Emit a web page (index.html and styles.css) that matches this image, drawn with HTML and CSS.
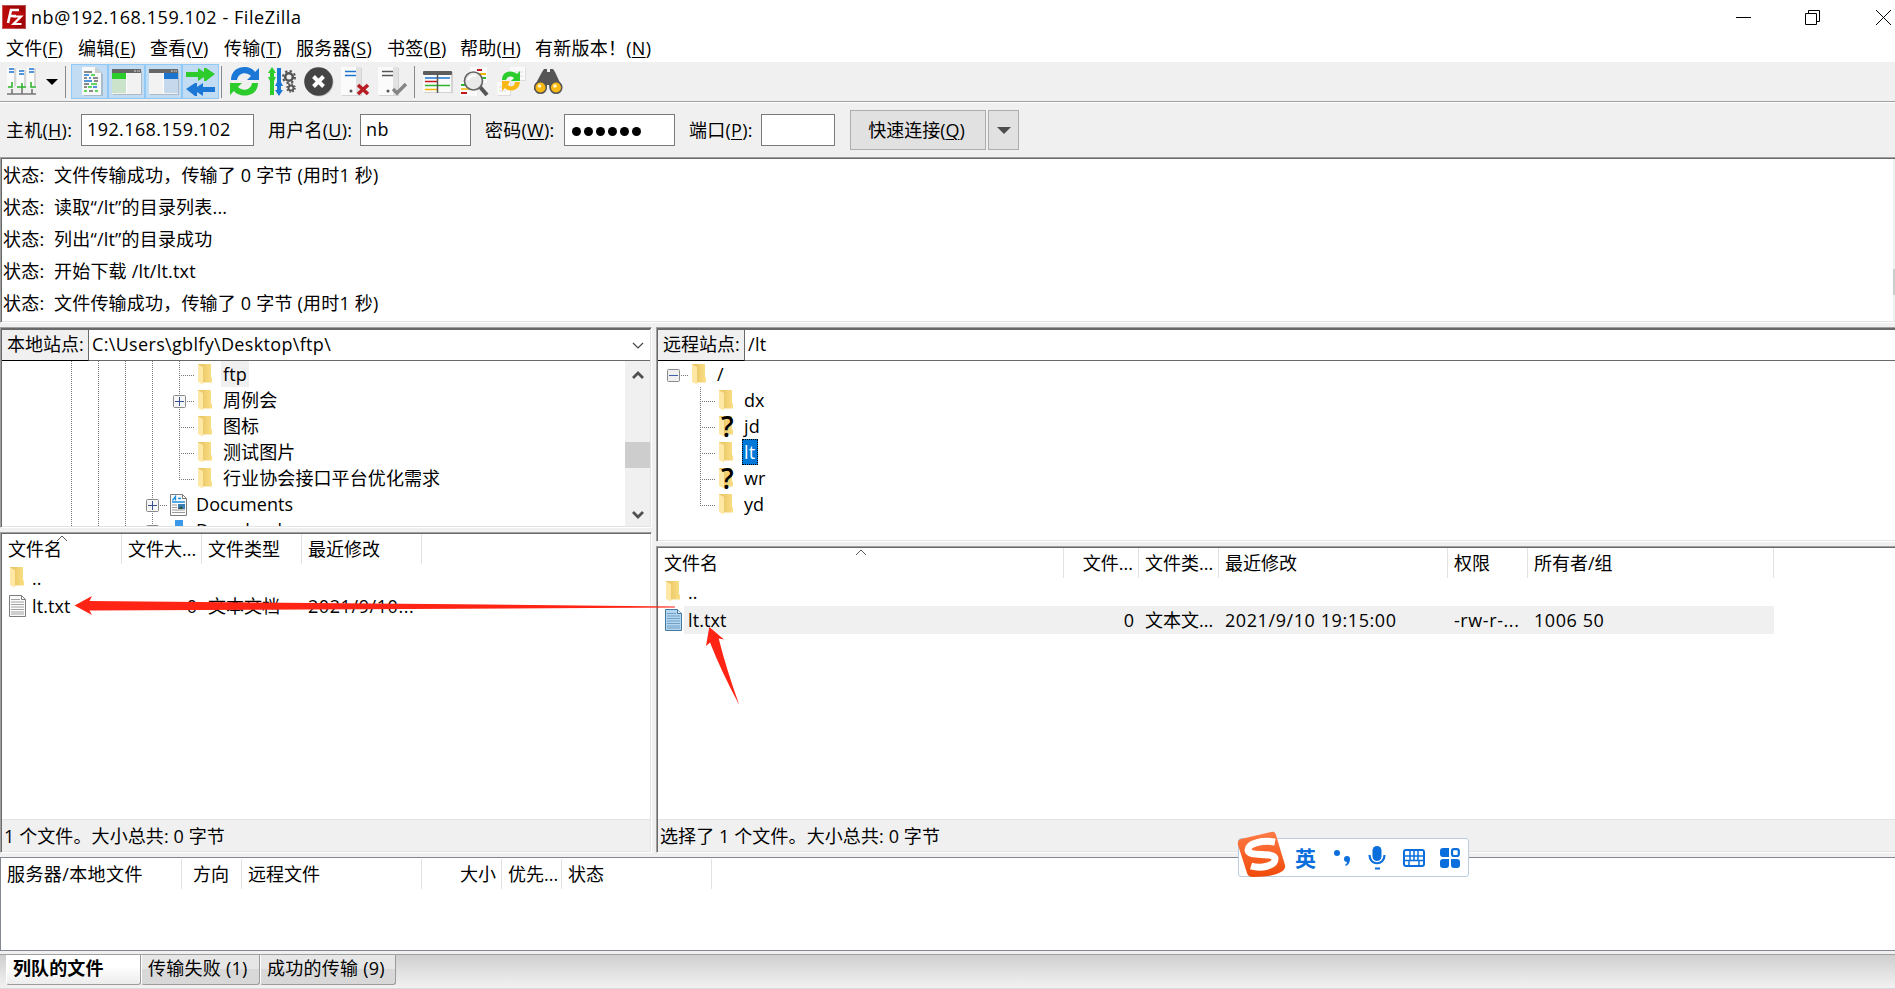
FILE: index.html
```html
<!DOCTYPE html>
<html lang="zh-CN">

<head>
    <meta charset="utf-8">
    <title>nb@192.168.159.102 - FileZilla</title>
    <link rel="stylesheet" href="styles.css">
</head>

<body>
    <!-- shared icons -->
    <svg class="defs" width="0" height="0">
        <defs>
            <linearGradient id="gFolder" x1="0" x2="1" y1="0" y2="0">
                <stop offset="0.3" stop-color="#ebc968" />
                <stop offset="1" stop-color="#fbdf87" />
            </linearGradient>
            <linearGradient id="gSogou" x1="0" x2="0" y1="0" y2="1">
                <stop offset="0" stop-color="#ff7a45" />
                <stop offset="1" stop-color="#f04a0a" />
            </linearGradient>
            <symbol id="folder" viewBox="0 0 15 22">
                <path d="M0 0H13V13.500H14V18.500H4.500L0 17Z" fill="url(#gFolder)" />
                <path d="M0 0.500L5 3V20.500L0 18Z" fill="#ffe8a6" />
            </symbol>
            <symbol id="file" viewBox="0 0 17 22">
                <path d="M0.500 0.500H12.500L16.500 4.500V21.500H0.500Z" fill="#fbfbfb" stroke="#7d7d7d" />
                <path d="M12.500 0.500V4.500H16.500" fill="none" stroke="#7d7d7d" />
                <path d="M2 4.500H11M2 7H15M2 9.500H15M2 12H15M2 14.500H15M2 17H15M2 19H15" stroke="#a2a2a2" />
            </symbol>
            <symbol id="file-sel" viewBox="0 0 17 22">
                <path d="M0.500 0.500H12.500L16.500 4.500V21.500H0.500Z" fill="#b5d7f1" stroke="#44789f" />
                <path d="M12.500 0.500V4.500H16.500" fill="#d9ebf8" stroke="#44789f" />
                <path d="M2 4.500H11M2 7H15M2 9.500H15M2 12H15M2 14.500H15M2 17H15M2 19H15" stroke="#6f9fc3" />
            </symbol>
            <symbol id="docs" viewBox="0 0 17 22">
                <path d="M0.500 0.500H12.500L16.500 4.500V21.500H0.500Z" fill="#fbfbfb" stroke="#7d7d7d" />
                <path d="M12.500 0.500V4.500H16.500" fill="none" stroke="#7d7d7d" />
                <path d="M2.500 6.500L5.500 2.500V6.500M8 4.500H11M2 8H15" stroke="#1e8fe0" stroke-width="1.300" fill="none" />
                <path d="M2 11H7M2 13.500H7M2 16H15M2 18.500H15" stroke="#999" />
                <rect x="8" y="10" width="7" height="5" fill="#3d7fb5" />
                <path d="M8 15L11 12L13 15Z" fill="#2b5540" />
            </symbol>
            <symbol id="twisty-plus" viewBox="0 0 13 13">
                <rect x="0.500" y="0.500" width="12" height="12" rx="1" fill="#f6f6f6" stroke="#8a8a8a" />
                <path d="M2 6.500H11M6.500 2V11" stroke="#33518f" />
            </symbol>
            <symbol id="twisty-minus" viewBox="0 0 13 13">
                <rect x="0.500" y="0.500" width="12" height="12" rx="1" fill="#f0f0f0" stroke="#8a8a8a" />
                <path d="M2 6.500H11" stroke="#3f5fa8" />
            </symbol>
            <symbol id="server" viewBox="0 0 22 30">
                <rect x="1" y="1" width="20" height="28" fill="#d4d4d4" />
                <rect width="20" height="28" fill="#e2e2e2" />
                <rect width="15" height="28" fill="#fbfbfb" />
            </symbol>
        </defs>
    </svg>

    <div class="window">
        <div class="titlebar">
            <svg class="logo" width="24" height="24" viewBox="0 0 24 24">
                <rect width="24" height="24" fill="#b80a0a" />
                <path d="M0 0H24V24H12L24 8Z" fill="#8f0606" opacity=".6" />
                <rect x=".5" y=".5" width="23" height="23" fill="none" stroke="#fff" stroke-dasharray="1 1" opacity=".6" />
                <path d="M6 18L9 5H17M8 11H14" fill="none" stroke="#fff" stroke-width="2.600" />
                <path d="M11.500 11.500H19L11.500 19H19.500" fill="none" stroke="#fff" stroke-width="2.200" />
            </svg>
            <span class="title">nb@192.168.159.102 - FileZilla</span>
            <svg class="controls" width="160" height="17" viewBox="0 0 160 17">
                <path d="M1 8.500H16" stroke="#000" />
                <path d="M70.500 4.500H81.500V15.500H70.500ZM73.500 4.500V1.500H84.500V12.500H81.500" fill="none" stroke="#000" />
                <path d="M141 1L156 16M156 1L141 16" stroke="#000" />
            </svg>
        </div>

        <div class="menubar">
            <span>文件(<u>F</u>)</span>
            <span>编辑(<u>E</u>)</span>
            <span class="view">查看(<u>V</u>)</span>
            <span>传输(<u>T</u>)</span>
            <span class="server">服务器(<u>S</u>)</span>
            <span class="bookmark">书签(<u>B</u>)</span>
            <span class="help">帮助(<u>H</u>)</span>
            <span>有新版本！(<u>N</u>)</span>
        </div>

        <div class="toolbar">
            <div class="btn">
                <svg viewBox="0 0 30 30">
                    <g fill="#fbfbfb"><rect width="9" height="19" /><rect x="10" y="2" width="9" height="18" /><rect x="20" width="9" height="19" /></g>
                    <path d="M8 1V19M18 3V20M28 1V19" stroke="#d6d6d6" stroke-width="2" />
                    <path d="M2 2H7M2 5H7M12 4H17M12 7H17M22 2H27M22 5H27" stroke="#1b74cf" stroke-width="1.300" />
                    <path d="M5 15V20H1M10 20H19M15 16V22M24 15V20H29" fill="none" stroke="#2fb52f" stroke-width="1.600" />
                    <path d="M0 27H29M5 22V27M15 22V27M25 22V27" stroke="#777" stroke-width="1.600" />
                </svg>
            </div>
            <div class="arrow"><svg viewBox="0 0 12 6"><path d="M0 0H12L6 6Z" /></svg></div>
            <div class="sep first"></div>
            <div class="group">
                <div class="btn on">
                    <svg viewBox="-2 0 30 30">
                        <path d="M7 1H20L26 7V29H7Z" fill="#a9bccc" /><path d="M5 0H18L24 6V28H5Z" fill="#f8f8f8" /><path d="M18 0V6H24Z" fill="#ccc" />
                        <path d="M7 5H15M7 11H10M16 11H21M7 17H12M7 20H10M17 14H21M12 24H16" stroke="#666" stroke-width="1.600" />
                        <path d="M7 8H12M12 11H14M7 14H15M16 20H20" stroke="#1b74cf" stroke-width="1.600" />
                        <path d="M14 8H18M14 17H20M7 24H10M11 20H15M18 24H21" stroke="#2bcc2b" stroke-width="1.600" />
                    </svg>
                </div>
                <div class="btn on">
                    <svg viewBox="0 0 30 30">
                        <rect x="1" y="4" width="29" height="24" fill="#adb9c4" /><rect y="2" width="29" height="25" fill="#f2f2f2" /><rect y="2" width="29" height="4" fill="#666" />
                        <path d="M22 4H24M25 4H26.500M27 4H28" stroke="#ddd" /><rect y="6" width="14" height="6" fill="#2bcc2b" /><rect y="12" width="14" height="14" fill="#cbe3ca" /><path d="M14.500 6V27" stroke="#fff" />
                    </svg>
                </div>
                <div class="btn on">
                    <svg viewBox="0 0 30 30">
                        <rect x="1" y="4" width="29" height="24" fill="#adb9c4" /><rect y="2" width="29" height="25" fill="#f2f2f2" /><rect y="2" width="29" height="4" fill="#666" />
                        <path d="M22 4H24M25 4H26.500M27 4H28" stroke="#ddd" /><rect x="15" y="6" width="14" height="6" fill="#1b74cf" /><rect x="15" y="12" width="14" height="14" fill="#c6d9ec" /><path d="M14.500 6V27" stroke="#fff" />
                    </svg>
                </div>
                <div class="btn on">
                    <svg viewBox="0 0 30 30">
                        <path d="M0 5H12V1L18 5V1H20L29 7L20 14H18V10L12 14V10H0Z" fill="#2bcc2b" />
                        <path d="M29 20H17V16L11 20V16H9L0 22L9 29H11V25L17 29V25H29Z" fill="#1b78d6" />
                    </svg>
                </div>
            </div>
            <div class="sep tight"></div>
            <div class="btn">
                <svg viewBox="0 0 30 30">
                    <path d="M1 13C1 -2 20 -3 25 5L29 1V13H17L21 9C16 4 8 6 7 13Z" fill="#1b78d6" />
                    <path d="M28 16C28 31 9 31 4 24L0 28V16H12L8 20C13 25 21 23 22 16Z" fill="#2bcc2b" />
                </svg>
            </div>
            <div class="btn">
                <svg viewBox="0 0 30 30">
                    <path d="M5 0L9 6H7V10H9L7 14V28H3V14L1 10H3V6H1Z" fill="#2bcc2b" />
                    <path d="M12 29L8 23H10V19H8L10 15V1H14V15L16 19H14V23H16Z" fill="#1b78d6" />
                    <circle cx="22" cy="10" r="3.800" fill="none" stroke="#555" stroke-width="2.600" /><circle cx="22" cy="10" r="6" fill="none" stroke="#555" stroke-width="2" stroke-dasharray="2.350" />
                    <circle cx="24" cy="21" r="2.500" fill="none" stroke="#555" stroke-width="2" /><circle cx="24" cy="21" r="4" fill="none" stroke="#555" stroke-width="1.600" stroke-dasharray="1.570" />
                </svg>
            </div>
            <div class="btn">
                <svg viewBox="0 0 30 30">
                    <circle cx="15.500" cy="15.500" r="14" fill="#ccc" /><circle cx="14.500" cy="14.500" r="14.300" fill="#454545" />
                    <path d="M9.500 9.500L19.500 19.500M19.500 9.500L9.500 19.500" stroke="#fff" stroke-width="4" />
                </svg>
            </div>
            <div class="btn">
                <svg viewBox="0 0 30 30">
                    <use href="#server" width="22" height="30" />
                    <path d="M4 4.500H15M4 8.500H15" stroke="#1b74cf" stroke-width="1.700" /><circle cx="10" cy="24" r="1.500" fill="#555" />
                    <path d="M17 18L27 27M27 18L17 27" stroke="#b81c24" stroke-width="3.600" />
                </svg>
            </div>
            <div class="btn">
                <svg viewBox="0 0 30 30">
                    <use href="#server" width="22" height="30" />
                    <path d="M4 4.500H15M4 8.500H15" stroke="#555" stroke-width="1.700" /><circle cx="10" cy="24" r="1.500" fill="#555" />
                    <path d="M15 22L19 26L28 17" fill="none" stroke="#858585" stroke-width="3.400" />
                </svg>
            </div>
            <div class="sep"></div>
            <div class="btn">
                <svg viewBox="0 0 30 30">
                    <rect x="1" y="5" width="29" height="21" fill="#d3d3d3" /><rect y="4" width="28" height="21" fill="#fafafa" /><rect y="4" width="29" height="4" rx="1" fill="#5d5d5d" />
                    <path d="M2 11H27" stroke="#1b74cf" stroke-width="1.500" /><path d="M2 14.500H14" stroke="#c4161c" stroke-width="1.500" /><path d="M2 18.500H27" stroke="#2bb52b" stroke-width="1.500" /><path d="M2 22.500H14" stroke="#f5b400" stroke-width="1.500" /><path d="M14.500 6V26" stroke="#555" stroke-width="1.500" />
                </svg>
            </div>
            <div class="btn">
                <svg viewBox="0 0 30 30">
                    <rect x="10" width="17" height="16" fill="#fafafa" /><rect x="0" y="15" width="17" height="14" fill="#fafafa" />
                    <path d="M17 3H22" stroke="#c4161c" stroke-width="2" /><path d="M18 7H26" stroke="#f5b400" stroke-width="2" /><path d="M1 18H7M15 11H26" stroke="#2bb52b" stroke-width="2" /><path d="M1 22H9" stroke="#f5b400" stroke-width="1.500" /><path d="M1 26H7" stroke="#c4161c" stroke-width="2" />
                    <path d="M20 20L27 28" stroke="#555" stroke-width="4" /><circle cx="13.500" cy="14" r="9" fill="#e9e9e9" stroke="#666" stroke-width="1.700" /><path d="M8 13C9 9 13 8 16 9" fill="none" stroke="#fff" stroke-width="2" />
                </svg>
            </div>
            <div class="btn">
                <svg viewBox="0 0 30 30">
                    <rect x="14" y="1" width="15" height="13" fill="#dcdcdc" /><rect x="1" y="16" width="13" height="13" fill="#dcdcdc" />
                    <rect x="13" width="15" height="13" fill="#fafafa" /><rect y="15" width="13" height="13" fill="#fafafa" />
                    <path d="M18 5H26M23 9H26M2 20H5M2 24H9" stroke="#ddd" />
                    <path d="M5 13C5 3 16 3 20 7L23 4V14H14L17 11C13 8 10 10 9 13Z" fill="#2bcc2b" />
                    <path d="M23 15C22 25 11 25 8 21L5 24V14H13L11 18C14 21 18 19 18 15Z" fill="#f9b914" />
                </svg>
            </div>
            <div class="btn">
                <svg viewBox="0 0 30 30">
                    <path d="M8 5L10 2H13V5H16V2H19L21 5L28 20V23H16L15 18H13L12 23H0V20Z" fill="#555" />
                    <circle cx="6.500" cy="20.500" r="5.800" fill="#f9b914" stroke="#555" stroke-width="1.500" /><circle cx="22" cy="20.500" r="5.800" fill="#f9b914" stroke="#555" stroke-width="1.500" />
                    <circle cx="5.500" cy="19" r="1.800" fill="#fff6c9" /><circle cx="21" cy="19" r="1.800" fill="#fff6c9" />
                </svg>
            </div>
        </div>

        <div class="quickconnect">
            <label class="host">主机(<u>H</u>):</label>
            <div class="field host">192.168.159.102</div>
            <label class="user">用户名(<u>U</u>):</label>
            <div class="field">nb</div>
            <label class="pass">密码(<u>W</u>):</label>
            <div class="field dots"><i></i><i></i><i></i><i></i><i></i><i></i></div>
            <label class="port">端口(<u>P</u>):</label>
            <div class="field port"></div>
            <div class="button">快速连接(<u>Q</u>)</div>
            <div class="button drop"><svg width="14" height="7" viewBox="0 0 14 7"><path d="M0 0H14L7 7Z" fill="#4c4c4c" /></svg></div>
        </div>

        <div class="log">
            <div class="lines">
                <p><b>状态:</b>文件传输成功，传输了 0 字节 (用时1 秒)</p>
                <p><b>状态:</b>读取“/lt”的目录列表...</p>
                <p><b>状态:</b>列出“/lt”的目录成功</p>
                <p><b>状态:</b>开始下载 /lt/lt.txt</p>
                <p><b>状态:</b>文件传输成功，传输了 0 字节 (用时1 秒)</p>
            </div>
            <div class="log-scroll"><div></div></div>
        </div>

        <div class="panes">
            <div class="pane local">
                <div class="box treebox">
                    <div class="site">
                        <span class="name">本地站点:</span>
                        <span class="path">C:\Users\gblfy\Desktop\ftp\</span>
                        <svg class="chev" width="12" height="7" viewBox="0 0 12 7"><path d="M1 1L6 6L11 1" fill="none" stroke="#444" stroke-width="1.200" /></svg>
                    </div>
                    <div class="treewrap">
                        <div class="tree">
                            <div class="node"><i class="v"></i><i class="v"></i><i class="v"></i><i class="v"></i><i class="c"></i><span class="ico"><svg class="fo"><use href="#folder" /></svg></span><span class="lbl cur">ftp</span></div>
                            <div class="node"><i class="v"></i><i class="v"></i><i class="v"></i><i class="v"></i><i class="c"><svg class="tw"><use href="#twisty-plus" /></svg></i><span class="ico"><svg class="fo"><use href="#folder" /></svg></span><span class="lbl">周例会</span></div>
                            <div class="node"><i class="v"></i><i class="v"></i><i class="v"></i><i class="v"></i><i class="c"></i><span class="ico"><svg class="fo"><use href="#folder" /></svg></span><span class="lbl">图标</span></div>
                            <div class="node"><i class="v"></i><i class="v"></i><i class="v"></i><i class="v"></i><i class="c"></i><span class="ico"><svg class="fo"><use href="#folder" /></svg></span><span class="lbl">测试图片</span></div>
                            <div class="node"><i class="v"></i><i class="v"></i><i class="v"></i><i class="v"></i><i class="c last"></i><span class="ico"><svg class="fo"><use href="#folder" /></svg></span><span class="lbl">行业协会接口平台优化需求</span></div>
                            <div class="node"><i class="v"></i><i class="v"></i><i class="v"></i><i class="c"><svg class="tw"><use href="#twisty-plus" /></svg></i><span class="ico"><svg class="fi"><use href="#docs" /></svg></span><span class="lbl">Documents</span></div>
                            <div class="node"><i class="v"></i><i class="v"></i><i class="v"></i><i class="c"><svg class="tw"><use href="#twisty-plus" /></svg></i><span class="ico"><svg class="fi dl" viewBox="0 0 17 22"><path d="M5 0H13V8H17L9 16L1 8H5Z" fill="#3a98e8" /></svg></span><span class="lbl">Downloads</span></div>
                        </div>
                        <div class="scroll">
                            <svg width="12" height="9" viewBox="0 0 12 9"><path d="M1 8L6 3L11 8" fill="none" stroke="#505050" stroke-width="2.800" /></svg>
                            <div class="thumb"></div>
                            <svg width="12" height="9" viewBox="0 0 12 9"><path d="M1 1L6 6L11 1" fill="none" stroke="#505050" stroke-width="2.800" /></svg>
                        </div>
                    </div>
                </div>
                <div class="box listbox">
                    <div class="row head">
                        <span>文件名<svg class="sort" width="12" height="6" viewBox="0 0 12 6"><path d="M1 6L6 1L11 6" fill="none" stroke="#555" /></svg></span>
                        <span class="num">文件大...</span><span>文件类型</span><span>最近修改</span>
                    </div>
                    <div class="row"><span class="fname"><svg class="fo"><use href="#folder" /></svg><em>..</em></span></div>
                    <div class="row"><span class="fname"><svg class="fi"><use href="#file" /></svg><em>lt.txt</em></span><span class="num">0</span><span>文本文档</span><span class="date">2021/9/10...</span></div>
                    <div class="status">1 个文件。大小总共: 0 字节</div>
                </div>
            </div>

            <div class="pane remote">
                <div class="box treebox">
                    <div class="site">
                        <span class="name">远程站点:</span>
                        <span class="path">/lt</span>
                    </div>
                    <div class="treewrap">
                        <div class="tree">
                            <div class="node"><i class="c root"><svg class="tw"><use href="#twisty-minus" /></svg></i><span class="ico"><svg class="fo"><use href="#folder" /></svg></span><span class="lbl">/</span></div>
                            <div class="node sub"><i class="c"></i><span class="ico"><svg class="fo"><use href="#folder" /></svg></span><span class="lbl">dx</span></div>
                            <div class="node sub"><i class="c"></i><span class="ico"><svg class="fo"><use href="#folder" /></svg><b class="q">?</b></span><span class="lbl">jd</span></div>
                            <div class="node sub"><i class="c"></i><span class="ico"><svg class="fo"><use href="#folder" /></svg></span><span class="lbl sel">lt</span></div>
                            <div class="node sub"><i class="c"></i><span class="ico"><svg class="fo"><use href="#folder" /></svg><b class="q">?</b></span><span class="lbl">wr</span></div>
                            <div class="node sub"><i class="c last"></i><span class="ico"><svg class="fo"><use href="#folder" /></svg></span><span class="lbl">yd</span></div>
                        </div>
                    </div>
                </div>
                <div class="box listbox">
                    <div class="row head">
                        <span>文件名<svg class="sort" width="12" height="6" viewBox="0 0 12 6"><path d="M1 6L6 1L11 6" fill="none" stroke="#555" /></svg></span>
                        <span class="num">文件...</span><span>文件类...</span><span>最近修改</span><span>权限</span><span>所有者/组</span>
                    </div>
                    <div class="row"><span class="fname"><svg class="fo"><use href="#folder" /></svg><em>..</em></span></div>
                    <div class="row picked"><span class="fname"><svg class="fi"><use href="#file-sel" /></svg><em>lt.txt</em></span><span class="num">0</span><span>文本文...</span><span class="date">2021/9/10 19:15:00</span><span class="date">-rw-r-...</span><span class="date">1006 50</span></div>
                    <div class="status">选择了 1 个文件。大小总共: 0 字节</div>
                </div>
            </div>
        </div>

        <div class="queue">
            <div class="row head">
                <span class="srv">服务器/本地文件</span><span class="dir">方向</span><span>远程文件</span><span class="num">大小</span><span>优先...</span><span>状态</span>
            </div>
        </div>

        <div class="tabs">
            <div class="tab active">列队的文件</div>
            <div class="tab fail">传输失败 (1)</div>
            <div class="tab done">成功的传输 (9)</div>
        </div>
    </div>

    <!-- input method bar floating over the window -->
    <div class="ime">
        <svg class="sogou" width="50" height="48" viewBox="0 0 50 48">
            <path d="M4 8L34 1Q38 0 39 4L48 34Q49 38 44 41Q36 46 16 46Q11 46 10 42L1 14Q0 9 4 8Z" fill="url(#gSogou)" />
            <path d="M38 11C26 9 11 12 11 19C11 27 38 20 38 28C38 35 24 38 14 35" fill="none" stroke="#fff" stroke-width="7" />
        </svg>
        <span>英</span>
        <svg class="punct" width="18" height="18" viewBox="0 0 18 18"><circle cx="4" cy="4" r="3" fill="#0a6fdc" /><path d="M14 7A3 3 0 1 0 14 13Q14 15 12 16L13 17Q17 15 17 10A3 3 0 0 0 14 7Z" fill="#0a6fdc" /></svg>
        <svg class="mic" width="18" height="24" viewBox="0 0 18 24"><rect x="4.500" width="9" height="15" rx="4.500" fill="#0a6fdc" /><path d="M1.500 9C1.500 20 16.500 20 16.500 9M7 22.500H12" fill="none" stroke="#0a6fdc" stroke-width="2.200" /></svg>
        <svg class="kbd" width="22" height="18" viewBox="0 0 22 18"><rect x="1" y="1" width="20" height="16" rx="2" fill="none" stroke="#0a6fdc" stroke-width="2" /><path d="M2 7H20M2 11.500H20M7 2V11M11 2V11M15 2V11M6 11V16M16 11V16" stroke="#0a6fdc" stroke-width="1.500" /></svg>
        <svg class="apps" width="20" height="20" viewBox="0 0 20 20"><path d="M3 0H9V9H3Q0 9 0 6V3Q0 0 3 0ZM3 11H9V17Q9 20 6 20H3Q0 20 0 17V14Q0 11 3 11ZM11 11H17Q20 11 20 14V17Q20 20 17 20H14Q11 20 11 17Z" fill="#0a6fdc" /><rect x="12" y="1.200" width="6.800" height="6.800" rx="2" fill="none" stroke="#0a6fdc" stroke-width="2.200" /></svg>
    </div>

    <svg class="marks" width="1895" height="989" viewBox="0 0 1895 989">
        <path d="M74.500 605.500L92 596L89.500 601L460 604.200L675 606.500V607.500L460 608.700L89.500 610.500L92 615Z" />
        <path d="M709.300 627L724 639.500L718.700 638.500Q726 668 739.300 705Q722 673 710 642.500L706 646Z" />
    </svg>
</body>

</html>
```
FILE: styles.css
```css
* {
    box-sizing: border-box;
}

body {
    margin: 0;
    font-family: "Open Sans", "Noto Sans CJK SC", sans-serif;
    font-size: 18px;
    color: #000;
    background-color: #f0f0f0;
    white-space: nowrap;
}

svg {
    display: block;
    flex: none;
}

.defs {
    position: absolute;
}

u {
    text-decoration-thickness: 1px;
    text-underline-offset: 2px;
}

.window {
    width: 1895px;
    height: 989px;
    overflow: hidden;
    display: flex;
    flex-direction: column;
}

/* title and menu */
.titlebar {
    height: 34px;
    background-color: #fff;
    display: flex;
    align-items: center;
    padding-left: 2px;
}

.title {
    margin-left: 5px;
    flex: 1;
    letter-spacing: 0.57px;
}

.menubar {
    height: 28px;
    background-color: #fff;
    display: flex;
    line-height: 28px;
    padding-left: 6px;
    letter-spacing: 0.25px;
}

.menubar span { width: 72px; }
.menubar .view { width: 74px; }
.menubar .server { width: 91px; }
.menubar .bookmark { width: 73px; }
.menubar .help { width: 75px; }

/* toolbar */
.toolbar {
    height: 41px;
    display: flex;
    padding: 2px 0 0 3px;
    border-bottom: 1px solid #fff;
    box-shadow: inset 0 -1px #a0a0a0;
}

.btn {
    width: 37px;
    height: 35px;
    padding: 3px 0 0 4px;
}

.btn svg {
    width: 30px;
    height: 30px;
}

.arrow {
    width: 25px;
    padding: 15px 0 0 6px;
}

.arrow svg {
    width: 12px;
    height: 6px;
}

.sep {
    width: 1px;
    height: 32px;
    margin: 2px 4px 0 3px;
    background-color: #8a8a8a;
    flex: none;
}

.sep.first {
    margin: 2px 5px 0 0;
}

.sep.tight {
    margin: 2px 4px 0 2px;
}

.group {
    display: flex;
}

.btn.on {
    background-color: #c1dcf3;
    border: 1px solid #90c8f6;
    padding: 2px 0 0 3px;
}

/* quick connect */
.quickconnect {
    height: 54px;
    display: flex;
    align-items: center;
    padding-left: 6px;
}

.quickconnect label {
    margin-top: -2px;
    letter-spacing: 0.25px;
}

.quickconnect label.host { width: 75px; }
.quickconnect label.user { width: 92px; }
.quickconnect label.pass { width: 79px; }
.quickconnect label.port { width: 72px; }

.field {
    width: 111px;
    height: 32px;
    line-height: 29px;
    border: 1px solid #7a7a7a;
    background-color: #fff;
    margin-right: 14px;
    padding-left: 5px;
    letter-spacing: 0.4px;
}

.field.host { width: 173px; }
.field.port { width: 74px; margin-right: 15px; }

.dots {
    display: flex;
    align-items: center;
    gap: 3px;
    padding: 2px 0 0 7px;
}

.dots i {
    width: 9px;
    height: 9px;
    border-radius: 50%;
    background-color: #000;
}

.button {
    width: 136px;
    height: 40px;
    line-height: 38px;
    padding-right: 3px;
    text-align: center;
    border: 1px solid #adadad;
    background-color: #e1e1e1;
}

.button.drop {
    width: 31px;
    margin-left: 2px;
    padding-right: 0;
    display: flex;
    align-items: center;
    justify-content: center;
}

/* message log */
.log {
    height: 166px;
    display: flex;
    justify-content: space-between;
    background-color: #fff;
    border-left: 1px solid #a0a0a0;
    border-top: 1px solid #a0a0a0;
    border-bottom: 1px solid #fff;
    box-shadow: inset 1px 1px #696969, inset 0 -1px #e3e3e3;
    padding: 1px 0 1px 2px;
    letter-spacing: 0.2px;
}

.log p {
    margin: 0;
    height: 32px;
    line-height: 32px;
}

.log b {
    display: inline-block;
    width: 51px;
    font-weight: normal;
}

.log-scroll {
    width: 2px;
    background-color: #f0f0f0;
    padding-top: 110px;
}

.log-scroll div {
    height: 26px;
    background-color: #cdcdcd;
}

/* local and remote panes */
.panes {
    height: 526px;
    margin-top: 4px;
    display: flex;
    gap: 4px;
}

.pane {
    display: flex;
    flex-direction: column;
    gap: 4px;
}

.local { width: 652px; }
.remote { width: 1239px; }

.box {
    border: 1px solid #a0a0a0;
    border-right-color: #fff;
    border-bottom-color: #fff;
    box-shadow: inset 1px 1px #696969, inset -1px -1px #e3e3e3;
    background-color: #fff;
    padding: 1px;
    display: flex;
    flex-direction: column;
}

.remote .box {
    border-right: 0;
    padding-right: 0;
    box-shadow: inset 1px 1px #696969, inset 0 -1px #e3e3e3;
}

.local .treebox { height: 201px; }
.remote .treebox { height: 215px; }

.listbox {
    flex: 1;
}

.site {
    height: 32px;
    flex: none;
    display: flex;
    border-top: 1px solid #696969;
    border-bottom: 1px solid #696969;
}

.site .name {
    width: 87px;
    height: 31px;
    line-height: 29px;
    padding-left: 5px;
    background-color: #f0f0f0;
    border-right: 1px solid #696969;
    border-bottom: 1px solid #000;
}

.site .path {
    flex: 1;
    line-height: 28px;
    padding-left: 3px;
    letter-spacing: 0.33px;
}

.chev {
    margin: 12px 6px 0 0;
}

.treewrap {
    flex: 1;
    display: flex;
    min-height: 0;
    overflow: hidden;
}

.tree {
    flex: 1;
}

.node {
    height: 26px;
    line-height: 26px;
    display: flex;
    padding-left: 69px;
}

.remote .node { padding-left: 15px; }
.remote .sub { padding-left: 42px; }

.v {
    width: 27px;
    background: repeating-linear-gradient(#777 0 1px, transparent 1px 2px) 0 0 / 1px 100% no-repeat;
}

.c {
    width: 15px;
    position: relative;
    background:
        repeating-linear-gradient(#777 0 1px, transparent 1px 2px) 0 0 / 1px 100% no-repeat,
        repeating-linear-gradient(90deg, #777 0 1px, transparent 1px 2px) 0 14px / 100% 1px no-repeat;
}

.c.last {
    background-size: 1px 15px, 100% 1px;
}

.c.root {
    background-size: 0 0, 100% 1px;
}

.tw {
    position: absolute;
    left: -6px;
    top: 8px;
    width: 13px;
    height: 13px;
}

.ico {
    width: 27px;
    padding: 3px 0 0 4px;
    position: relative;
}

.fo {
    width: 15px;
    height: 22px;
}

.fi {
    width: 17px;
    height: 22px;
}

.ico .fi {
    margin-left: -1px;
}

.q {
    position: absolute;
    left: 6px;
    top: 0;
    font: 600 28px/26px "Open Sans", sans-serif;
}

.lbl {
    padding: 0 2px;
    letter-spacing: 0.1px;
}

.cur {
    background-color: #f0f0f0;
}

.sel {
    color: #fff;
    background-color: #0078d7;
    outline: 1px dotted #000;
    outline-offset: -1px;
    padding-right: 3px;
}

.scroll {
    width: 25px;
    background-color: #f0f0f0;
    display: flex;
    flex-direction: column;
    align-items: center;
    padding: 9px 0 6px;
}

.scroll svg:last-child {
    margin-top: auto;
}

.thumb {
    width: 25px;
    height: 26px;
    margin-top: 63px;
    background-color: #cdcdcd;
}

/* file lists */
.row {
    height: 28px;
    line-height: 28px;
    display: grid;
    flex: none;
}

.head {
    height: 30px;
    line-height: 30px;
}

.local .row { grid-template-columns: 120px 80px 100px 120px; }
.remote .row { grid-template-columns: 406px 75px 80px 229px 80px 246px; }
.queue .row { grid-template-columns: 181px 60px 180px 80px 60px 150px; }

.row span {
    padding-left: 6px;
    position: relative;
}

.head span {
    border-right: 1px solid #e3e3e3;
}

.row .num {
    text-align: right;
    padding-right: 5px;
}

.row .date {
    letter-spacing: 0.58px;
}

.sort {
    position: absolute;
    left: calc(50% - 6px);
    top: 1px;
}

.row .fname {
    display: flex;
    align-items: center;
    padding-left: 7px;
}

.fname svg {
    margin-right: 2px;
}

.fname .fo {
    margin: 0 3px 0 1px;
}

.fname em {
    font-style: normal;
    padding-left: 4px;
    letter-spacing: 0.1px;
    flex: 1;
}

.picked em,
.picked > span:not(.fname) {
    background-color: #f0f0f0;
}

.status {
    height: 32px;
    margin-top: auto;
    line-height: 32px;
    padding-left: 2px;
    background-color: #f0f0f0;
    border-top: 1px solid #e3e3e3;
    letter-spacing: 0.1px;
}

/* transfer queue */
.queue {
    height: 94px;
    margin-top: 4px;
    padding-top: 1px;
    background-color: #fff;
    border: 1px solid #828790;
    border-right: 0;
}

.queue .srv {
    letter-spacing: 0.4px;
}

.queue .dir {
    padding-left: 11px;
}

.tabs {
    flex: 1;
    margin-top: 3px;
    display: flex;
    padding-left: 6px;
    background: linear-gradient(#cfcfcf, #f2f2f2);
    border-top: 1px solid #a0a0a0;
    border-bottom: 1px solid #d8d8d8;
}

.tab {
    height: 30px;
    line-height: 26px;
    padding-left: 6px;
    letter-spacing: 0.1px;
    border: 1px solid #9b9b9b;
    border-top: 0;
    border-left-color: #fff;
    border-radius: 0 0 3px 3px;
    background: linear-gradient(#e6e6e6 50%, #d8d8d8 50%);
}

.tab.active {
    width: 135px;
    font-weight: bold;
    background: linear-gradient(#fff 40%, #ececec);
}

.tab.fail {
    width: 119px;
    letter-spacing: 0.25px;
}

.tab.done {
    width: 136px;
    letter-spacing: 0.25px;
}

/* input method bar */
.ime {
    position: absolute;
    left: 1238px;
    top: 838px;
    width: 231px;
    height: 39px;
    background-color: #fff;
    border: 1px solid #bccde0;
    border-radius: 3px;
    display: flex;
    align-items: center;
}

.sogou {
    margin: -5px 6px 0 -2px;
}

.ime span {
    width: 38px;
    margin-left: 2px;
    font: bold 21px/37px "Noto Sans CJK SC", sans-serif;
    color: #0a6fdc;
}

.mic { margin-left: 17px; }
.kbd { margin-left: 17px; }
.apps { margin-left: 15px; }

.marks {
    position: absolute;
    left: 0;
    top: 0;
    fill: #ff2414;
    pointer-events: none;
}
```
